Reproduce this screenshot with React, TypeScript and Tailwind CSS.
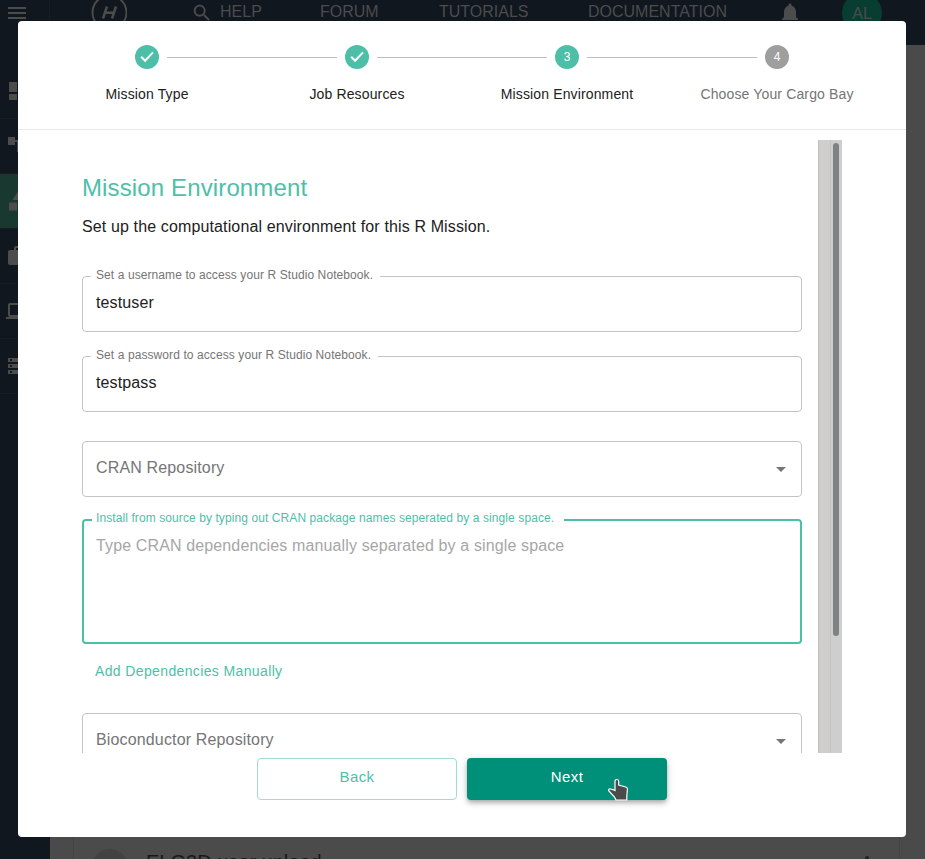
import React from "react";

const navLinks = [
  { label: "FORUM", box: "ml-[58px] w-[60px]" },
  { label: "TUTORIALS", box: "ml-[59px] w-[90px]" },
  { label: "DOCUMENTATION", box: "ml-[59px] w-[142px]" },
];

const steps = [
  { label: "Mission Type", state: "done" },
  { label: "Job Resources", state: "done" },
  { label: "Mission Environment", state: "active" },
  { label: "Choose Your Cargo Bay", state: "todo" },
];

const sideIcons = [
  "M3 13h8V3H3v10zm0 8h8v-6H3v6zm10 0h8V11h-8v10zm0-18v6h8V3h-8z",
  "M22 11V3h-7v3H9V3H2v8h7V8h2v10h4v3h7v-8h-7v3h-2V8h2v3z",
  "M12 2l-5.500 9h11zM17.500 13.500h4v8h-8v-8zM3 13.500h8v8H3z",
  "M20 6h-4V4c0-1.110-.89-2-2-2h-4c-1.110 0-2 .89-2 2v2H4c-1.110 0-1.990.89-1.990 2L2 19c0 1.110.89 2 2 2h16c1.110 0 2-.89 2-2V8c0-1.110-.89-2-2-2zm-6 0h-4V4h4v2z",
  "M20 18c1.100 0 1.990-.9 1.990-2L22 6c0-1.100-.9-2-2-2H4c-1.100 0-2 .9-2 2v10c0 1.100.9 2 2 2H0v2h24v-2h-4zM4 6h16v10H4V6z",
  "M2 20h20v-4H2v4zm2-3h2v2H4v-2zM2 4v4h20V4H2zm4 3H4V5h2v2zm-4 7h20v-4H2v4zm2-3h2v2H4v-2z",
];

function Caret() {
  return (
    <svg className="size-6 fill-[#757575]" viewBox="0 0 24 24">
      <path d="M7 10l5 5 5-5z" />
    </svg>
  );
}

function Backdrop() {
  return (
    <div className="flex h-full flex-col bg-[#4a4a4a]">
      <header className="flex h-[45px] shrink-0 items-start overflow-hidden bg-[#10171f] text-base leading-[24px] text-[#4c4c4c]">
        <div className="flex h-full w-[50px] items-start border-r border-[#171c24] pl-[5px]">
          <svg className="mt-px size-6 fill-[#4c4c4c]" viewBox="0 0 24 24">
            <path d="M3 18h18v-2H3v2zm0-5h18v-2H3v2zm0-7v2h18V6H3z" />
          </svg>
        </div>
        <svg className="-mt-[6px] ml-[41px] size-9 shrink-0" viewBox="0 0 36 36" fill="none" stroke="#4c4c4c">
          <circle cx="18.500" cy="18.500" r="17" strokeWidth="1.900" />
          <path d="M16 12.500l-4 12M25 12.500l-4 12M14 18.800h9" strokeWidth="2.500" />
        </svg>
        <svg className="ml-[64px] mt-[2px] size-[22px] shrink-0 fill-[#4c4c4c]" viewBox="0 0 24 24">
          <path d="M15.500 14h-.79l-.28-.27C15.410 12.590 16 11.110 16 9.500 16 5.910 13.090 3 9.500 3S3 5.910 3 9.500 5.910 16 9.500 16c1.610 0 3.090-.59 4.230-1.570l.27.28v.79l5 4.990L20.490 19l-4.990-5zm-6 0C7.010 14 5 11.990 5 9.500S7.010 5 9.500 5 14 7.010 14 9.500 11.990 14 9.500 14z" />
        </svg>
        <span className="ml-[7px] w-[42px]">HELP</span>
        {navLinks.map((n) => (
          <span key={n.label} className={n.box}>{n.label}</span>
        ))}
        <svg className="ml-[48px] mt-px size-6 shrink-0 fill-[#4c4c4c]" viewBox="0 0 24 24">
          <path d="M12 22c1.100 0 2-.9 2-2h-4c0 1.100.89 2 2 2zm6-6v-5c0-3.070-1.640-5.640-4.500-6.320V4c0-.83-.67-1.500-1.500-1.500s-1.500.67-1.500 1.500v.68C7.630 5.360 6 7.920 6 11v5l-2 2v1h16v-1l-2-2z" />
        </svg>
        <span className="-mt-[7px] ml-[40px] flex size-10 shrink-0 items-center justify-center rounded-full bg-[#083d31] pt-px">AL</span>
      </header>
      <div className="flex min-h-0 flex-1">
        <nav className="flex w-[50px] shrink-0 flex-col bg-[#10171f] pt-[19px]">
          {sideIcons.map((d, i) => (
            <div
              key={d}
              className={`flex h-[55px] items-center border-b border-[#171c24] pl-[6px] ${i === 2 ? "bg-[#19382f]" : ""}`}
            >
              <svg className="size-6 fill-[#4c4c4c]" viewBox="0 0 24 24">
                <path d={d} />
              </svg>
            </div>
          ))}
        </nav>
        <main className="flex flex-1 flex-col justify-end overflow-hidden pl-[23px] pr-[25px]">
          <div className="flex h-[60px] items-start overflow-hidden border-x border-[#444444] bg-[#4b4b4b] pl-[18px] pt-[50px]">
            <span className="size-9 shrink-0 rounded-full bg-[#424242]" />
            <span className="ml-[18px] flex-1 pt-px text-xl leading-6 text-[#181818]">ELG3D user upload</span>
            <span className="mr-[30px] mt-[7px] size-1 rounded-full bg-[#222222]" />
          </div>
        </main>
      </div>
    </div>
  );
}

function Stepper() {
  return (
    <div className="h-[109px] shrink-0 border-b border-[#e8e8e8] pt-6">
      <div className="flex items-center pl-[117px]">
        {steps.map((s, i) => (
          <React.Fragment key={s.label}>
            {i > 0 && <span className="mx-2 h-px w-[170px] bg-[#bdbdbd]" />}
            {s.state === "done" ? (
              <svg className="size-6" viewBox="0 0 24 24">
                <circle cx="12" cy="12" r="12" fill="#4dbfa9" />
                <path d="M6.200 11.700l3.900 4 7.900-8.300" fill="none" stroke="#fff" strokeWidth="2" />
              </svg>
            ) : (
              <span className={`flex size-6 items-center justify-center rounded-full text-xs text-white ${s.state === "active" ? "bg-[#4dbfa9]" : "bg-[#9e9e9e]"}`}>
                {i + 1}
              </span>
            )}
          </React.Fragment>
        ))}
      </div>
      <div className="flex pl-6 pt-[15px]">
        {steps.map((s) => (
          <span
            key={s.label}
            className={`w-[210px] text-center text-sm leading-5 tracking-[0.14px] ${s.state === "todo" ? "text-[#757575]" : "text-[#212121]"}`}
          >
            {s.label}
          </span>
        ))}
      </div>
    </div>
  );
}

function Field({ label, value, legend }: { label: string; value: string; legend: string }) {
  return (
    <fieldset className="h-[63px] rounded-[4px] border border-[#c4c4c4] pl-[13px]">
      <legend className={`-ml-[5px] h-[15px] pl-[5px] text-xs leading-[12px] tracking-[0.09px] text-[#757575] ${legend}`}>{label}</legend>
      <div className="pt-[9px] text-base leading-5 tracking-[0.13px] text-[#212121]">{value}</div>
    </fieldset>
  );
}

function SelectBox({ label }: { label: string }) {
  return (
    <div className="flex h-14 shrink-0 items-center justify-between rounded-[4px] border border-[#c4c4c4] pl-[13px] pr-2 text-base tracking-[0.15px] text-[#757575]">
      <span className="-mt-0.5">{label}</span>
      <Caret />
    </div>
  );
}

function Dialog() {
  return (
    <div className="absolute left-[18px] top-[21px] flex h-[816px] w-[888px] flex-col rounded-[4px] bg-white">
      <Stepper />
      <div className="mt-[10px] flex h-[613px] shrink-0 pl-16">
        <div className="flex w-[720px] flex-col overflow-hidden pt-8">
          <h2 className="text-2xl leading-8 tracking-[0.13px] text-[#4dbfa9]">Mission Environment</h2>
          <p className="mt-[11px] text-base leading-6 tracking-[0.13px] text-[#212121]">
            Set up the computational environment for this R Mission.
          </p>
          <div className="mt-[30px] flex flex-col gap-[17px]">
            <Field label="Set a username to access your R Studio Notebook." value="testuser" legend="w-[289px]" />
            <Field label="Set a password to access your R Studio Notebook." value="testpass" legend="w-[287px]" />
          </div>
          <div className="mt-[29px] flex flex-col">
            <SelectBox label="CRAN Repository" />
          </div>
          <fieldset className="mt-[15px] h-[132px] shrink-0 rounded-[4px] border-2 border-[#4dbfa9] pl-3">
            <legend className="-ml-1 h-[16px] w-[472px] pl-1 text-xs leading-[13px] tracking-[0.09px] text-[#4dbfa9]">
              Install from source by typing out CRAN package names seperated by a single space.
            </legend>
            <div className="pt-[8px] text-base leading-5 tracking-[0.13px] text-[#a6a6a6]">
              Type CRAN dependencies manually separated by a single space
            </div>
          </fieldset>
          <div className="mb-[31px] mt-[17px] pl-[13px] text-sm leading-[21px] tracking-[0.37px] text-[#4dbfa9]">
            Add Dependencies Manually
          </div>
          <SelectBox label="Bioconductor Repository" />
        </div>
        <div className="ml-4 flex w-6 border-l border-[#c9bfb6] bg-[#cecece]">
          <div className="w-3 border-r border-[#c8c2ba]" />
          <div className="ml-[2px] mt-[3px] h-[493px] w-[6px] rounded-full bg-[#7e8282]" />
        </div>
      </div>
      <div className="mt-[5px] flex gap-[10px] pl-[239px] text-[15px] tracking-[0.4px]">
        <button className="h-[42px] w-[200px] rounded-[4px] border border-[#a0dccf] pb-1 text-[#4dbfa9]">Back</button>
        <button className="h-[42px] w-[200px] rounded-[4px] bg-[#00907a] pb-1 text-white shadow-[0_2px_4px_-1px_rgba(0,0,0,0.2),0_4px_5px_0_rgba(0,0,0,0.14),0_1px_10px_0_rgba(0,0,0,0.12)]">Next</button>
      </div>
      <svg className="absolute left-[589px] top-[757px] size-6" viewBox="0 0 24 24">
        <path
          d="M8 12.500V3.200q0-1.700 1.800-1.700T11.700 3.200V7l7 2q1.800.5 1.700 2.200L19.800 18v4H9L7.500 19 1.500 12.500q0-1.800 2-1.500l3 .8z"
          fill="#4a4a4a"
          stroke="#fff"
          strokeWidth="1.200"
        />
      </svg>
    </div>
  );
}

export default function App() {
  return (
    <div className="relative h-[859px] w-[925px] overflow-hidden font-['Liberation_Sans',Arial,sans-serif]">
      <Backdrop />
      <Dialog />
    </div>
  );
}
